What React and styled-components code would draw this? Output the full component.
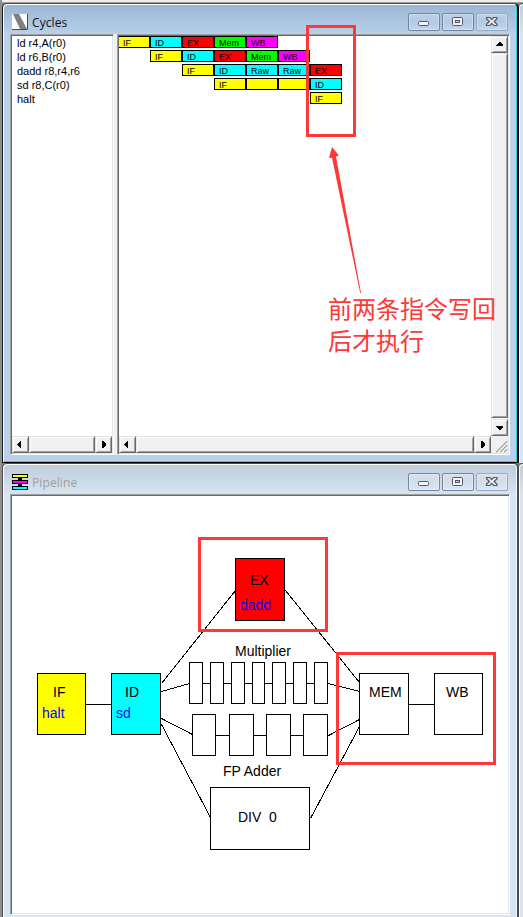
import React from "react";
import styled, { createGlobalStyle, css } from "styled-components";

const GlobalStyle = createGlobalStyle`
  * { box-sizing: border-box; }
  body { margin: 0; background: #d9e5f1; overflow: hidden; }
`;

const RED = "#fc3838";

const Desktop = styled.main`
  position: relative;
  display: grid;
  grid-template-columns: 517px 1fr;
  grid-template-rows: 460px 470px;
  width: 523px;
  height: 917px;
  overflow: hidden;
  padding: 3px 0 0 2px;
  background: linear-gradient(90deg, #8e8e8e 0 2px, transparent 2px),
    linear-gradient(180deg, #f0f0f0 0 2px, #a0a0a0 2px 3px, #808080 3px);
  font-family: "Liberation Sans", Arial, sans-serif;
  color: #000;
`;

const Frame = styled.section`
  width: 517px;
  height: ${(p) => (p.$active ? 460 : 470)}px;
  border-style: solid;
  border-width: 1px 2px 1px 1px;
  border-color: ${(p) => (p.$active ? "#4a4a4a #000 #000 #1a1a1a" : "#4a4a4a")};
  border-radius: 5px 5px 0 0;
  padding: 0 6px 6px 7px;
  background: ${(p) =>
    p.$active
      ? "linear-gradient(180deg, #9ab5d4 0, #b9d1ea 31px, #b9d1ea 100%)"
      : "linear-gradient(180deg, #bfcddb 0, #d7e4f2 31px, #d7e4f2 100%)"};
  box-shadow: inset 1px 1px 0 #fff,
    inset -1px ${(p) => (p.$active ? "-1px 0 #2fd0e6" : "0 0 #f4f8fc")};
`;

const NeighbourEdge = styled.div`
  border-top: 1px solid #4a4a4a;
  border-radius: 5px 0 0 0;
  background: linear-gradient(180deg, #bfcddb 0, #d7e4f2 31px, #d7e4f2 100%);
  box-shadow: inset 1px 1px 0 #fff;
`;

const TitleBar = styled.header`
  display: flex;
  align-items: flex-start;
  height: 30px;
  padding: 9px 3px 0 2px;
`;

const TitleIcon = styled.svg`
  display: block;
  width: 16px;
  height: 16px;
  margin-top: 1px;
`;

const Title = styled.h1`
  flex: 1;
  margin: 1px 0 0 4px;
  font: 400 12px/18px "Open Sans", "Noto Sans", sans-serif;
  letter-spacing: 0.1px;
  color: ${(p) => (p.$active ? "#101010" : "#9b9ea3")};
`;

const Controls = styled.div`
  display: flex;
  gap: 2px;
`;

const ControlButton = styled.button`
  width: 32px;
  height: 18px;
  padding: 0;
  border: 1px solid ${(p) => (p.$faint ? "#8fa9c6" : "#7286a4")};
  border-radius: 2px;
  background: linear-gradient(180deg, rgba(255, 255, 255, 0.28), rgba(255, 255, 255, 0.08) 50%, rgba(255, 255, 255, 0.2));
  box-shadow: inset 0 0 0 1px rgba(255, 255, 255, 0.3);

  svg { display: block; width: 30px; height: 16px; }
`;

const Split = styled.div`
  display: grid;
  grid-template-columns: 104px 393px;
  column-gap: 3px;
  width: 500px;
  height: 421px;
  background: #f0f0f0;
`;

const sunken = css`
  padding: 1px;
  border: 1px solid;
  border-color: #a0a0a0 #fff #fff #a0a0a0;
  background: #fff;
  box-shadow: inset 1px 1px 0 #696969, inset -1px -1px 0 #e3e3e3;
`;

const Pane = styled.div`
  ${sunken}
  display: flex;
  flex-direction: column;
  min-width: 0;
`;

const PaneBody = styled.div`
  display: flex;
  flex: 1;
  min-height: 0;
`;

const InstructionList = styled.ul`
  margin: 0;
  padding: 0 0 0 5px;
  list-style: none;
  font-size: 11px;
  line-height: 14px;
  white-space: nowrap;
`;

const Timeline = styled.div`
  display: flex;
  flex: 1;
  flex-direction: column;
  gap: 2px;
  min-width: 0;
  overflow: hidden;
`;

const TimelineRow = styled.div`
  display: flex;
  margin-left: -1px;
  padding-left: ${(p) => p.$start * 32}px;
`;

const stageColors = {
  IF: "#ffff00",
  ID: "#00ffff",
  EX: "#ff0000",
  Mem: "#00ff00",
  WB: "#ff00ff",
  Raw: "#00ffff",
  "": "#ffff00",
};

const Cell = styled.span`
  width: 32px;
  height: 12px;
  padding: 1px 0 0 4px;
  border: 1px solid #000;
  background: ${(p) => stageColors[p.$stage]};
  font-size: 9px;
  line-height: 11px;
`;

const ScrollTrack = styled.div`
  display: flex;
  flex-direction: ${(p) => (p.$vertical ? "column" : "row")};
  flex: ${(p) => (p.$vertical ? "0 0 17px" : "1")};
  height: ${(p) => (p.$vertical ? "auto" : "17px")};
`;

const raised = css`
  background: #f0f0f0;
  border: 1px solid;
  border-color: #e3e3e3 #696969 #696969 #e3e3e3;
  box-shadow: inset 1px 1px 0 #fff, inset -1px -1px 0 #a0a0a0;
`;

const ScrollButton = styled.div`
  ${raised}
  flex: 0 0 17px;
  width: 17px;
  height: 17px;

  svg { display: block; width: 15px; height: 15px; }
`;

const ScrollThumb = styled.div`
  ${raised}
  flex: 1;
  margin: ${(p) => (p.$vertical ? "0 0 1px" : "0")};
`;

const BottomBar = styled.div`
  display: flex;
  height: 17px;
`;

const SizeGrip = styled.svg`
  display: block;
  width: 17px;
  height: 17px;
  background: #f0f0f0;
`;

const Canvas = styled.div`
  ${sunken}
  position: relative;
  width: 500px;
  height: 421px;
`;

const Wires = styled.svg`
  display: block;
  width: 496px;
  height: 417px;
`;

const Node = styled.div`
  position: absolute;
  left: ${(p) => p.$x - 11}px;
  top: ${(p) => p.$y - 495}px;
  width: ${(p) => p.$w}px;
  height: ${(p) => p.$h}px;
  border: 1px solid #000;
  background: ${(p) => p.$fill || "#fff"};
`;

const Label = styled.span`
  position: absolute;
  left: ${(p) => p.$x - 11}px;
  top: ${(p) => p.$y - 495}px;
  font-size: 14px;
  line-height: 16px;
  white-space: pre;
  color: ${(p) => (p.$op ? "#0000ff" : "#000")};
`;

const Highlight = styled.div`
  position: absolute;
  left: ${(p) => p.$x}px;
  top: ${(p) => p.$y}px;
  width: ${(p) => p.$w}px;
  height: ${(p) => p.$h}px;
  border: 3px solid ${RED};
`;

const Arrow = styled.svg`
  position: absolute;
  left: 326px;
  top: 145px;
  width: 40px;
  height: 152px;
`;

const Note = styled.p`
  position: absolute;
  left: 328px;
  top: 292px;
  margin: 0;
  font: 400 24px/32px "Noto Sans CJK SC", sans-serif;
  color: ${RED};
  white-space: nowrap;
`;

const instructions = ["ld r4,A(r0)", "ld r6,B(r0)", "dadd r8,r4,r6", "sd r8,C(r0)", "halt"];

const timeline = [
  { start: 0, stages: ["IF", "ID", "EX", "Mem", "WB"] },
  { start: 1, stages: ["IF", "ID", "EX", "Mem", "WB"] },
  { start: 2, stages: ["IF", "ID", "Raw", "Raw", "EX"] },
  { start: 3, stages: ["IF", "", "", "ID"] },
  { start: 6, stages: ["IF"] },
];

const nodes = [
  [37, 673, 49, 62, "#ffff00"],
  [111, 673, 50, 62, "#00ffff"],
  [235, 558, 50, 63, "#ff0000"],
  [359, 673, 50, 62],
  [434, 673, 49, 62],
  [189, 662, 14, 42],
  [210, 662, 14, 42],
  [231, 662, 14, 42],
  [252, 662, 13, 42],
  [272, 662, 14, 42],
  [293, 662, 14, 42],
  [314, 662, 14, 42],
  [192, 714, 24, 42],
  [229, 714, 25, 42],
  [266, 714, 25, 42],
  [303, 714, 25, 42],
  [210, 787, 100, 63],
];

const labels = [
  [53, 684, "IF"],
  [42, 705, "halt", true],
  [125, 684, "ID"],
  [116, 705, "sd", true],
  [250, 572, "EX"],
  [240, 597, "dadd", true],
  [235, 643, "Multiplier"],
  [223, 763, "FP Adder"],
  [238, 809, "DIV  0"],
  [369, 684, "MEM"],
  [446, 684, "WB"],
];

const wires = [
  [85, 704, 111, 704],
  [408, 704, 434, 704],
  [200, 683, 316, 683],
  [213, 735, 305, 735],
  [161, 683, 235, 590],
  [161, 691, 189, 683],
  [161, 718, 192, 734],
  [161, 724, 210, 817],
  [285, 590, 359, 682],
  [328, 683, 359, 691],
  [328, 735, 359, 719],
  [310, 818, 359, 726],
];

const arrowPoints = {
  left: "8,4 8,11 7,11 4,8 4,7 7,4",
  right: "6,4 6,11 7,11 10,8 10,7 7,4",
  up: "4,9 11,9 11,8 8,5 7,5 4,8",
  down: "4,6 11,6 11,7 8,10 7,10 4,7",
};

function ArrowButton({ dir }) {
  return (
    <ScrollButton>
      <svg viewBox="0 0 15 15" shapeRendering="crispEdges">
        <polygon points={arrowPoints[dir]} />
      </svg>
    </ScrollButton>
  );
}

function ScrollBar({ vertical }) {
  return (
    <ScrollTrack $vertical={vertical}>
      <ArrowButton dir={vertical ? "up" : "left"} />
      <ScrollThumb $vertical={vertical} />
      <ArrowButton dir={vertical ? "down" : "right"} />
    </ScrollTrack>
  );
}

function WindowControls() {
  return (
    <Controls>
      <ControlButton aria-label="Minimize">
        <svg viewBox="0 0 30 16">
          <rect x="9.5" y="7.5" width="10" height="4" rx="1" fill="#f4f4f4" stroke="#535666" />
        </svg>
      </ControlButton>
      <ControlButton aria-label="Maximize">
        <svg viewBox="0 0 30 16">
          <rect x="9.5" y="3.5" width="10" height="8" rx="1" fill="#f4f4f4" stroke="#535666" />
          <rect x="12.5" y="6.5" width="4" height="2" fill="#b8cbe0" stroke="#535666" />
        </svg>
      </ControlButton>
      <ControlButton aria-label="Close" $faint>
        <svg viewBox="0 0 30 16">
          <path
            d="M9.5 3.5h3.2l2 2.2 2-2.2h3.3v1.3l-2.9 2.7 2.9 2.7v1.3h-3.3l-2-2.2-2 2.2H9.5v-1.3l2.9-2.7-2.9-2.7z"
            fill="#eeeeee"
            stroke="#535666"
            strokeWidth="1.2"
            strokeLinejoin="round"
          />
        </svg>
      </ControlButton>
    </Controls>
  );
}

function CyclesIcon() {
  return (
    <TitleIcon viewBox="0 0 16 16">
      <rect width="16" height="16" fill="#fff" />
      <path d="M1 0h6l8 15H8z" fill="#808080" />
      <path d="M15.5 0v15.5H0" fill="none" stroke="#008000" />
    </TitleIcon>
  );
}

function PipelineIcon() {
  return (
    <TitleIcon viewBox="0 0 16 16" shapeRendering="crispEdges">
      <path d="M6 3h4v10H6z" />
      <path d="M0 0h16v4H0zM0 6h16v4H0zM0 12h16v4H0z" />
      <path d="M1 1h14v2H1z" fill="#ff0" />
      <path d="M1 7h14v2H1z" fill="#f0f" />
      <path d="M1 13h14v2H1z" fill="#0ff" />
    </TitleIcon>
  );
}

function CyclesWindow() {
  return (
    <Frame $active>
      <TitleBar>
        <CyclesIcon />
        <Title $active>Cycles</Title>
        <WindowControls />
      </TitleBar>
      <Split>
        <Pane>
          <PaneBody>
            <InstructionList>
              {instructions.map((text) => (
                <li key={text}>{text}</li>
              ))}
            </InstructionList>
          </PaneBody>
          <BottomBar>
            <ScrollBar />
          </BottomBar>
        </Pane>
        <Pane>
          <PaneBody>
            <Timeline>
              {timeline.map((row, r) => (
                <TimelineRow key={r} $start={row.start}>
                  {row.stages.map((stage, i) => (
                    <Cell key={i} $stage={stage}>{stage}</Cell>
                  ))}
                </TimelineRow>
              ))}
            </Timeline>
            <ScrollBar vertical />
          </PaneBody>
          <BottomBar>
            <ScrollBar />
            <SizeGrip viewBox="0 0 17 17">
              <path d="M5 16L16 5M9 16l7-7M13 16l3-3" stroke="#a0a0a0" strokeWidth="1.6" />
              <path d="M4 16L16 4M8 16l8-8M12 16l4-4" stroke="#fff" strokeWidth="0.7" />
            </SizeGrip>
          </BottomBar>
        </Pane>
      </Split>
    </Frame>
  );
}

function PipelineWindow() {
  return (
    <Frame>
      <TitleBar>
        <PipelineIcon />
        <Title>Pipeline</Title>
        <WindowControls />
      </TitleBar>
      <Canvas>
        <Wires viewBox="12 496 496 417" shapeRendering="crispEdges">
          {wires.map(([x1, y1, x2, y2], i) => (
            <line key={i} x1={x1 + 0.5} y1={y1 + 0.5} x2={x2 + 0.5} y2={y2 + 0.5} stroke="#000" />
          ))}
        </Wires>
        {nodes.map(([x, y, w, h, fill], i) => (
          <Node key={i} $x={x} $y={y} $w={w} $h={h} $fill={fill} />
        ))}
        {labels.map(([x, y, text, op]) => (
          <Label key={text} $x={x} $y={y} $op={op}>{text}</Label>
        ))}
      </Canvas>
    </Frame>
  );
}

export default function App() {
  return (
    <>
      <GlobalStyle />
      <Desktop>
        <CyclesWindow />
        <NeighbourEdge />
        <PipelineWindow />
        <NeighbourEdge />
        <Highlight $x={306} $y={25} $w={50} $h={112} />
        <Highlight $x={198} $y={537} $w={130} $h={95} />
        <Highlight $x={336} $y={652} $w={160} $h={113} />
        <Arrow viewBox="326 145 40 152">
          <path d="M332 147L339 155.5L336 156.5L361 293H360.2L332 157.8L329 158z" fill={RED} />
        </Arrow>
        <Note>
          前两条指令写回
          <br />
          后才执行
        </Note>
      </Desktop>
    </>
  );
}
